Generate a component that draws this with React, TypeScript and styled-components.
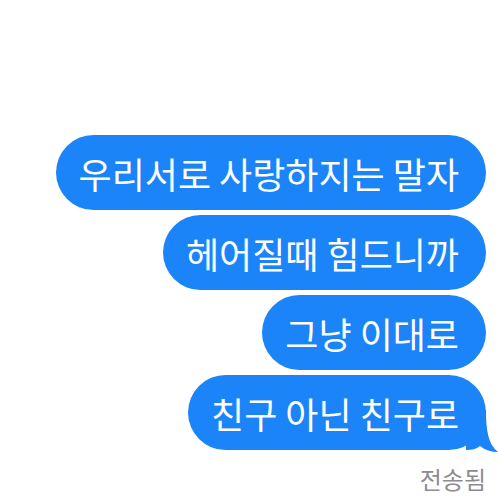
import React from "react";
import styled, { createGlobalStyle } from "styled-components";

const GlobalStyle = createGlobalStyle`
  html, body {
    margin: 0;
    padding: 0;
    background: #ffffff;
  }
  body {
    font-family: "Noto Sans CJK KR", "Noto Sans", sans-serif;
  }
`;

const BLUE = "#1a84f8";

const messages = [
  "우리서로 사랑하지는 말자",
  "헤어질때 힘드니까",
  "그냥 이대로",
  "친구 아닌 친구로",
];

const Tail = () => (
  <TailSvg width="32" height="42" viewBox="0 0 32 42">
    <path
      d="M0,0 H20 C20,20 22,34 32,42 C25,42 19,40 14,36 C10,39 6,40 0,40 Z"
      fill={BLUE}
    />
  </TailSvg>
);

export default function App() {
  return (
    <>
      <GlobalStyle />
      <Screen>
        <Thread>
          {messages.map((text, i) => {
            const last = i === messages.length - 1;
            return (
              <Bubble key={i}>
                <span>{text}</span>
                {last && <Tail />}
              </Bubble>
            );
          })}
        </Thread>
        <Status>전송됨</Status>
      </Screen>
    </>
  );
}

const Screen = styled.div`
  width: 500px;
  height: 500px;
  box-sizing: border-box;
  padding: 135px 14px 0 0;
  display: flex;
  flex-direction: column;
  align-items: flex-end;
  overflow: hidden;
`;

const Thread = styled.div`
  display: flex;
  flex-direction: column;
  align-items: flex-end;
  gap: 5px;
`;

const Bubble = styled.div`
  position: relative;
  height: 75px;
  box-sizing: border-box;
  padding: 0 27px 0 23px;
  display: flex;
  align-items: center;
  background: ${BLUE};
  color: #ffffff;
  font-size: 36px;
  font-weight: 400;
  border-radius: 38px;
  white-space: nowrap;

  span {
    position: relative;
    z-index: 1;
  }
`;

const TailSvg = styled.svg`
  position: absolute;
  right: -12px;
  bottom: -2px;
  display: block;
`;

const Status = styled.div`
  margin-top: 16px;
  color: #8c8c90;
  font-size: 24px;
  font-weight: 400;
  line-height: 26px;
`;
